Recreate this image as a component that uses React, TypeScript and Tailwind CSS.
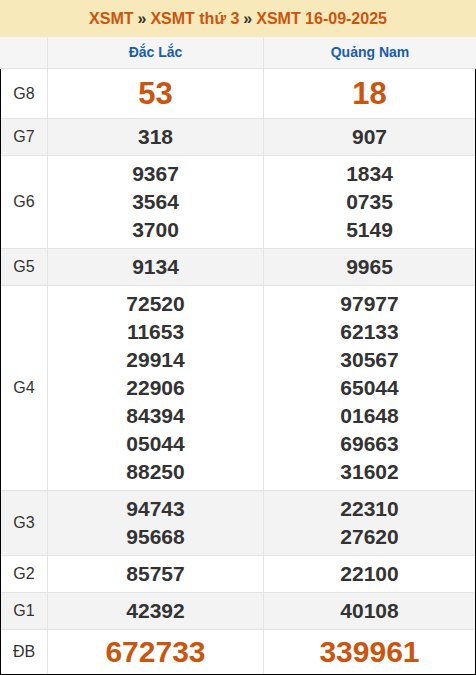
import React from 'react';

type Row = {
  label: string;
  a: string[];
  b: string[];
  big?: boolean;
  shaded?: boolean;
};

const ROWS: Row[] = [
  { label: 'G8', a: ['53'], b: ['18'], big: true },
  { label: 'G7', a: ['318'], b: ['907'], shaded: true },
  { label: 'G6', a: ['9367', '3564', '3700'], b: ['1834', '0735', '5149'] },
  { label: 'G5', a: ['9134'], b: ['9965'], shaded: true },
  {
    label: 'G4',
    a: ['72520', '11653', '29914', '22906', '84394', '05044', '88250'],
    b: ['97977', '62133', '30567', '65044', '01648', '69663', '31602'],
  },
  { label: 'G3', a: ['94743', '95668'], b: ['22310', '27620'], shaded: true },
  { label: 'G2', a: ['85757'], b: ['22100'] },
  { label: 'G1', a: ['42392'], b: ['40108'], shaded: true },
  { label: 'ĐB', a: ['672733'], b: ['339961'], big: true },
];

const Numbers: React.FC<{ items: string[]; big?: boolean; last?: boolean }> = ({ items, big, last }) => (
  <div className="flex flex-col items-center justify-center py-1">
    {items.map((n, i) =>
      big ? (
        <span
          key={i}
          className={`font-bold text-[#c9550f] ${last ? 'text-[30px] leading-[36px]' : 'text-[31px] leading-[41px]'}`}
        >
          {n}
        </span>
      ) : (
        <span key={i} className="text-[21px] leading-[28px] font-bold text-[#333333]">
          {n}
        </span>
      )
    )}
  </div>
);

const App: React.FC = () => {
  return (
    <div className="w-[476px] bg-white font-['Liberation_Sans',Arial,sans-serif]">
      <div className="h-[37px] bg-[#f8e9ba] flex items-center justify-center text-[16px] font-bold text-[#c9550f]">
        XSMT <span className="mx-1 text-[#333333]">»</span> XSMT thứ 3{' '}
        <span className="mx-1 text-[#333333]">»</span> XSMT 16-09-2025
      </div>

      <div className="flex h-[32px] bg-[#f5f5f5] border-b border-[#e3e3e3] text-[14px] font-bold text-[#1b5ea9]">
        <div className="w-[48px] border-r border-[#e3e3e3]" />
        <div className="w-[216px] border-r border-[#e3e3e3] flex items-center justify-center">Đắc Lắc</div>
        <div className="flex-1 flex items-center justify-center">Quảng Nam</div>
      </div>

      <div className="border-l border-r border-b border-black">
        {ROWS.map((row, i) => {
          const last = i === ROWS.length - 1;
          return (
            <div
              key={row.label}
              className={`flex ${row.shaded ? 'bg-[#f3f3f3]' : 'bg-white'} ${last ? '' : 'border-b border-[#e3e3e3]'}`}
            >
              <div className="w-[47px] border-r border-[#e3e3e3] flex items-center justify-center text-[16px] text-[#333333]">
                {row.label}
              </div>
              <div className="w-[216px] border-r border-[#e3e3e3]">
                <Numbers items={row.a} big={row.big} last={last} />
              </div>
              <div className="flex-1">
                <Numbers items={row.b} big={row.big} last={last} />
              </div>
            </div>
          );
        })}
      </div>
    </div>
  );
};

export default App;
